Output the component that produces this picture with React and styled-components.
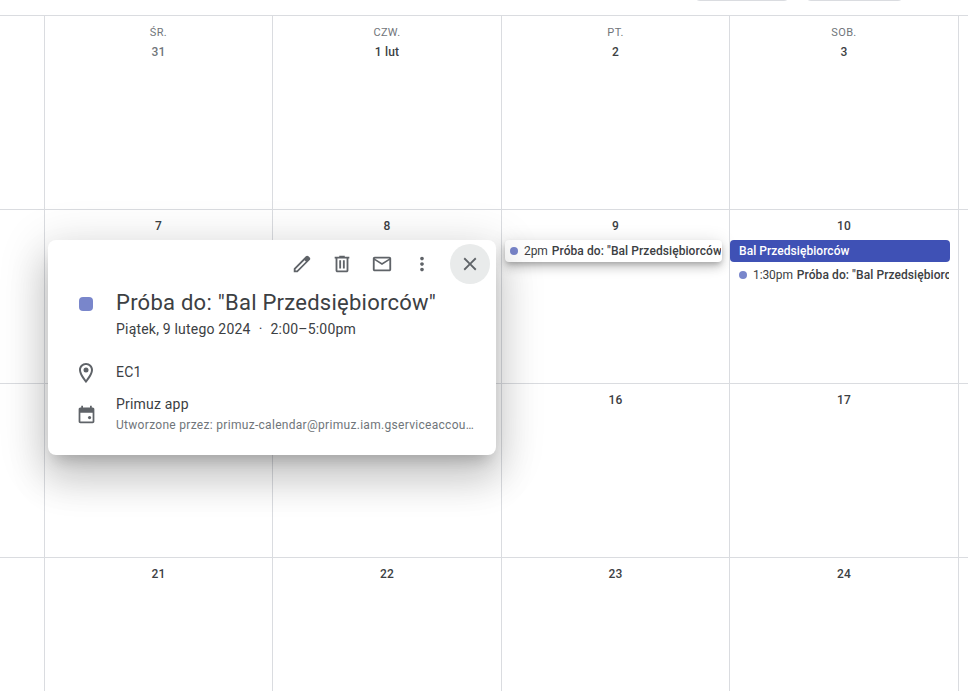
import React from "react"
import styled, { createGlobalStyle } from "styled-components"

const GlobalStyle = createGlobalStyle`
  html, body {
    margin: 0;
    background: #fff;
    height: 100%;
    overflow: hidden;
  }
  body {
    font-family: Roboto, "Liberation Sans", sans-serif;
    color: #3c4043;
  }
`

const Page = styled.div`
  position: relative;
  width: 968px;
  height: 691px;
  overflow: hidden;
`

const TopBar = styled.div`
  height: 15px;
  display: flex;
  justify-content: flex-end;
  gap: 15px;
  padding-right: 64px;
  overflow: hidden;
`

const TopButton = styled.div`
  width: ${p => p.$w}px;
  height: 20px;
  margin-top: -19px;
  border: 1px solid #dadce0;
  border-radius: 6px;
  box-sizing: border-box;
`

const Week = styled.div`
  display: grid;
  grid-template-columns: 44px 228px 229px 228px 229px 10px;
  height: ${p => p.$h}px;
  border-top: 1px solid #dadce0;
  box-sizing: border-box;
`

const Cell = styled.div`
  box-sizing: border-box;
  border-left: ${p => (p.$edge ? "none" : "1px solid #dadce0")};
  display: flex;
  flex-direction: column;
  align-items: center;
  padding-top: ${p => (p.$head ? 9 : 8)}px;
`

const WeekDay = styled.div`
  font-size: 11px;
  line-height: 16px;
  font-weight: 400;
  color: #70757a;
  letter-spacing: 0.35px;
`

const DayNum = styled.div`
  font-size: 12px;
  line-height: 16px;
  font-weight: 500;
  color: ${p => (p.$muted ? "#70757a" : "#3c4043")};
  letter-spacing: 0.2px;
`

const HeaderDayNum = styled(DayNum)`
  margin-top: 3px;
`

const EventList = styled.div`
  align-self: stretch;
  display: flex;
  flex-direction: column;
  margin-top: 6px;
  padding-left: ${p => p.$pl || 0}px;
  gap: 2px;
`

const Banner = styled.div`
  height: 22px;
  width: 220px;
  line-height: 22px;
  background: #3f51b5;
  color: #fff;
  border-radius: 4px;
  font-size: 12px;
  font-weight: 500;
  letter-spacing: 0.05px;
  padding-left: 9px;
  box-sizing: border-box;
`

const TimedEvent = styled.div`
  display: flex;
  align-items: center;
  height: 22px;
  width: ${p => p.$w}px;
  box-sizing: border-box;
  padding: 0 ${p => p.$pr}px 0 ${p => p.$pl}px;
  font-size: 12px;
  white-space: nowrap;
  background: #fff;
  border-radius: 4px;
  color: #3c4043;
  box-shadow: ${p =>
    p.$raised
      ? "0 6px 10px 0 rgba(0,0,0,.14), 0 1px 18px 0 rgba(0,0,0,.12), 0 3px 5px -1px rgba(0,0,0,.2)"
      : "none"};
`

const Dot = styled.span`
  width: 8px;
  height: 8px;
  border-radius: 50%;
  background: #7986cb;
  flex: none;
  margin-right: 6px;
`

const Time = styled.span`
  flex: none;
  margin-right: 4px;
  letter-spacing: -0.1px;
`

const EventName = styled.span`
  font-weight: 500;
  letter-spacing: 0.08px;
  min-width: 0;
  overflow: hidden;
`

const Popup = styled.div`
  position: absolute;
  left: 48px;
  top: 240px;
  width: 448px;
  height: 215px;
  background: #fff;
  border-radius: 8px;
  box-shadow: 0 24px 38px 3px rgba(0,0,0,.14), 0 9px 46px 8px rgba(0,0,0,.12), 0 11px 15px -7px rgba(0,0,0,.2);
  box-sizing: border-box;
  padding-top: 4px;
`

const Toolbar = styled.div`
  display: flex;
  justify-content: flex-end;
  padding-right: 6px;
  height: 40px;
`

const ToolButton = styled.div`
  width: 40px;
  height: 40px;
  border-radius: 50%;
  display: flex;
  align-items: center;
  justify-content: center;
  background: ${p => (p.$active ? "#e9ebeb" : "transparent")};
  margin-left: ${p => (p.$active ? 8 : 0)}px;
`

const Row = styled.div`
  display: flex;
  margin-top: ${p => p.$mt}px;
`

const IconSlot = styled.div`
  width: 68px;
  box-sizing: border-box;
  flex: none;
  display: flex;
  justify-content: center;
  padding-left: 8px;
  padding-top: ${p => p.$pt || 0}px;
  margin-top: ${p => p.$mt || 0}px;
`

const Swatch = styled.div`
  width: 14px;
  height: 14px;
  border-radius: 4px;
  background: #7986cb;
  margin-top: 8px;
`

const Title = styled.div`
  font-size: 22px;
  line-height: 28px;
  letter-spacing: 0.25px;
  color: #3c4043;
`

const SubTitle = styled.div`
  font-size: 14px;
  line-height: 20px;
  margin-top: 2px;
  color: #3c4043;
  letter-spacing: 0.2px;
`

const Sep = styled.span`
  margin: 0 8px;
`

const InfoText = styled.div`
  font-size: 14px;
  line-height: 20px;
  color: #3c4043;
  letter-spacing: 0.2px;
`

const InfoSmall = styled.div`
  font-size: 12px;
  line-height: 16px;
  margin-top: 3px;
  color: #70757a;
  width: 358px;
  letter-spacing: 0.3px;
  white-space: nowrap;
  overflow: hidden;
  text-overflow: ellipsis;
`

const Icon = ({ d, size = 22, children }) => (
  <svg width={size} height={size} viewBox="0 0 24 24" fill="#5f6368">
    {d && <path d={d} />}
    {children}
  </svg>
)

const icons = {
  edit: "M20.41 4.94l-1.35-1.35c-.78-.78-2.05-.78-2.83 0L3 16.82V21h4.18L20.41 7.77c.79-.78.79-2.05 0-2.83zm-14 14.12L5 19v-1.36l9.82-9.82 1.41 1.41-9.82 9.83z",
  trash: "M15 4V3H9v1H4v2h1v13c0 1.1.9 2 2 2h10c1.1 0 2-.9 2-2V6h1V4h-5zm2 15H7V6h10v13zM9 8h2v9H9zm4 0h2v9h-2z",
  mail: "M20 4H4c-1.1 0-2 .9-2 2v12c0 1.1.9 2 2 2h16c1.1 0 2-.9 2-2V6c0-1.1-.9-2-2-2zm0 14H4V8l8 5 8-5v10zm-8-7L4 6h16l-8 5z",
  more: "M12 8c1.1 0 2-.9 2-2s-.9-2-2-2-2 .9-2 2 .9 2 2 2zm0 2c-1.1 0-2 .9-2 2s.9 2 2 2 2-.9 2-2-.9-2-2-2zm0 6c-1.1 0-2 .9-2 2s.9 2 2 2 2-.9 2-2-.9-2-2-2z",
  close: "M19 6.41L17.59 5 12 10.59 6.41 5 5 6.41 10.59 12 5 17.59 6.41 19 12 13.41 17.59 19 19 17.59 13.41 12z",
  place: "M12 2C8.13 2 5 5.13 5 9c0 5.25 7 13 7 13s7-7.75 7-13c0-3.87-3.13-7-7-7zM7 9c0-2.76 2.24-5 5-5s5 2.24 5 5c0 2.88-2.88 7.19-5 9.88C9.92 16.21 7 11.85 7 9z",
  event: "M19 4h-1V2h-2v2H8V2H6v2H5c-1.11 0-1.99.9-1.99 2L3 20c0 1.1.89 2 2 2h14c1.1 0 2-.9 2-2V6c0-1.1-.9-2-2-2zm0 16H5V10h14v10z",
}

const EVENT = 'Próba do: "Bal Przedsiębiorców"'

const headers = [
  { day: "ŚR.", num: "31", muted: true },
  { day: "CZW.", num: "1 lut" },
  { day: "PT.", num: "2" },
  { day: "SOB.", num: "3" },
]

const App = () => (
  <Page>
    <GlobalStyle />
    <TopBar>
      <TopButton $w={96} />
      <TopButton $w={99} />
    </TopBar>

    <Week $h={194}>
      <Cell $edge />
      {headers.map(h => (
        <Cell $head key={h.day}>
          <WeekDay>{h.day}</WeekDay>
          <HeaderDayNum $muted={h.muted}>{h.num}</HeaderDayNum>
        </Cell>
      ))}
      <Cell />
    </Week>

    <Week $h={174}>
      <Cell $edge />
      <Cell><DayNum>7</DayNum></Cell>
      <Cell><DayNum>8</DayNum></Cell>
      <Cell>
        <DayNum>9</DayNum>
        <EventList $pl={3}>
          <TimedEvent $raised $w={217} $pl={5} $pr={1}>
            <Dot />
            <Time>2pm</Time>
            <EventName>{EVENT}</EventName>
          </TimedEvent>
        </EventList>
      </Cell>
      <Cell>
        <DayNum>10</DayNum>
        <EventList>
          <Banner>Bal Przedsiębiorców</Banner>
          <TimedEvent $w={220} $pl={9} $pr={1}>
            <Dot />
            <Time>1:30pm</Time>
            <EventName>{EVENT}</EventName>
          </TimedEvent>
        </EventList>
      </Cell>
      <Cell />
    </Week>

    <Week $h={174}>
      <Cell $edge />
      <Cell />
      <Cell />
      <Cell><DayNum>16</DayNum></Cell>
      <Cell><DayNum>17</DayNum></Cell>
      <Cell />
    </Week>

    <Week $h={150}>
      <Cell $edge />
      <Cell><DayNum>21</DayNum></Cell>
      <Cell><DayNum>22</DayNum></Cell>
      <Cell><DayNum>23</DayNum></Cell>
      <Cell><DayNum>24</DayNum></Cell>
      <Cell />
    </Week>

    <Popup>
      <Toolbar>
        <ToolButton><Icon d={icons.edit} /></ToolButton>
        <ToolButton><Icon d={icons.trash} /></ToolButton>
        <ToolButton><Icon d={icons.mail} /></ToolButton>
        <ToolButton><Icon d={icons.more} /></ToolButton>
        <ToolButton $active><Icon d={icons.close} /></ToolButton>
      </Toolbar>
      <Row $mt={5}>
        <IconSlot><Swatch /></IconSlot>
        <div>
          <Title>{EVENT}</Title>
          <SubTitle>
            Piątek, 9 lutego 2024<Sep>·</Sep>2:00–5:00pm
          </SubTitle>
        </div>
      </Row>
      <Row $mt={23}>
        <IconSlot $mt={-1}>
          <Icon d={icons.place} size={24}><circle cx="12" cy="9" r="2.5" /></Icon>
        </IconSlot>
        <InfoText>EC1</InfoText>
      </Row>
      <Row $mt={9}>
        <IconSlot $pt={10}>
          <Icon d={icons.event} size={21}><circle cx="15.5" cy="15.5" r="1.8" /></Icon>
        </IconSlot>
        <div>
          <InfoText>Primuz app</InfoText>
          <InfoSmall>Utworzone przez: primuz-calendar@primuz.iam.gserviceaccount.com</InfoSmall>
        </div>
      </Row>
    </Popup>
  </Page>
)

export default App
